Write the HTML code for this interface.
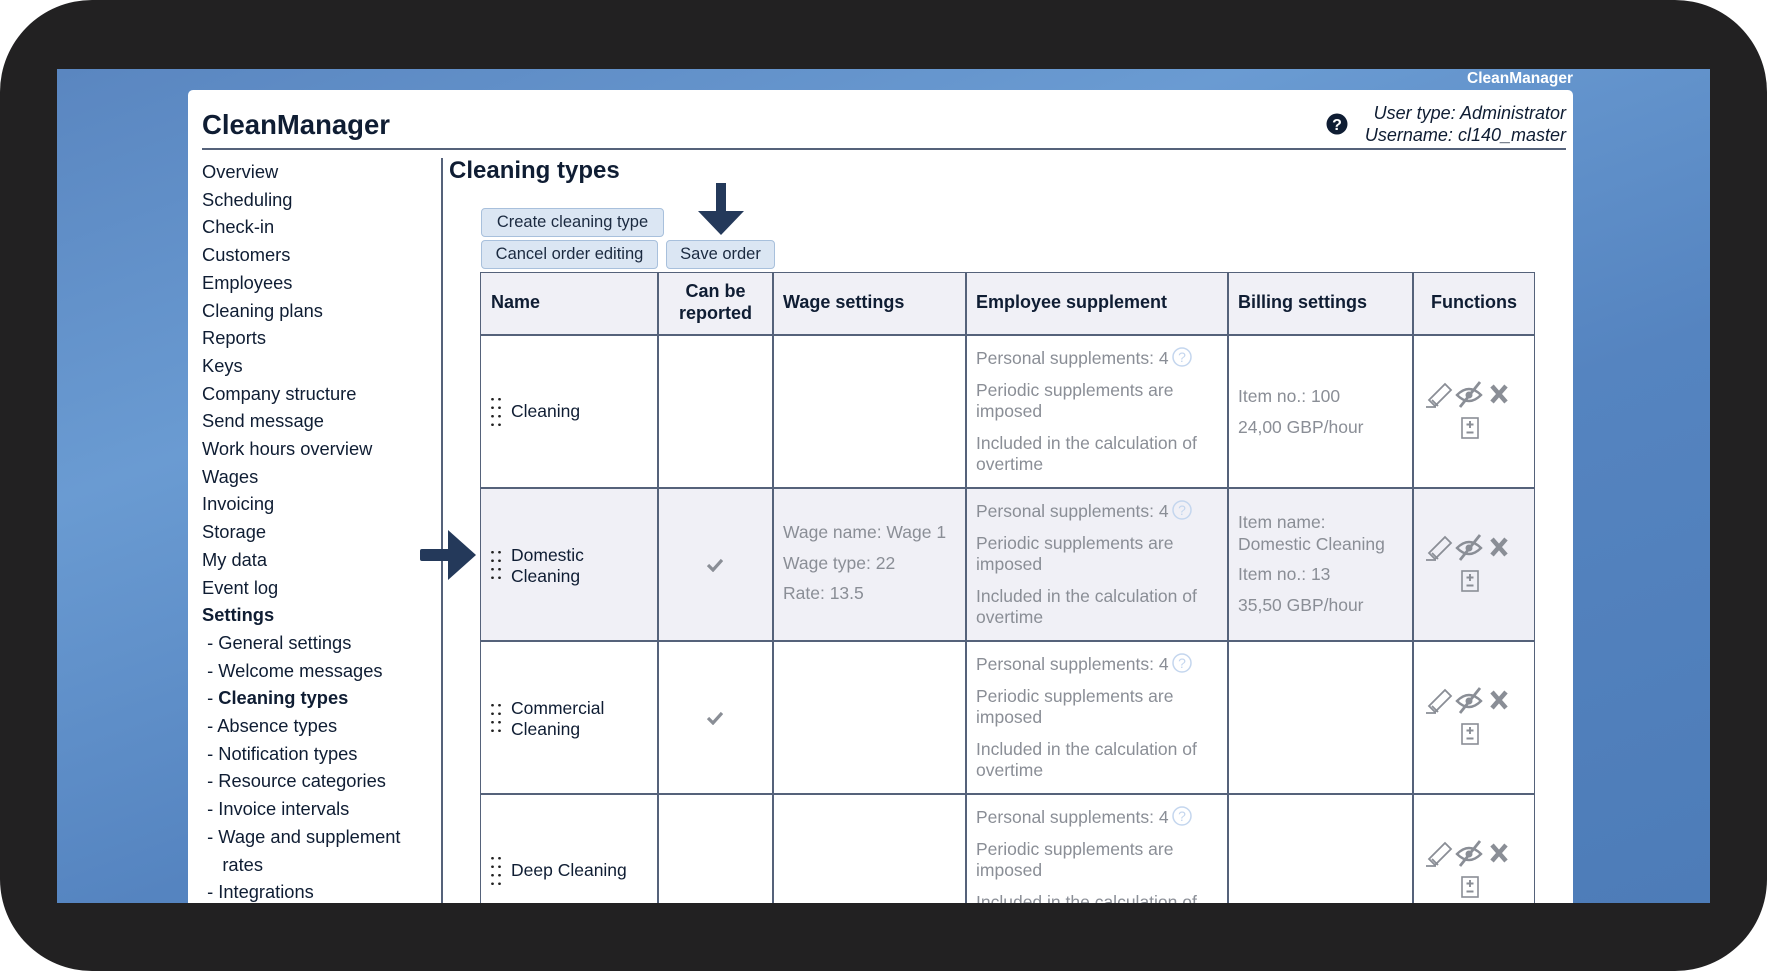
<!DOCTYPE html>
<html><head><meta charset="utf-8"><style>
*{margin:0;padding:0;box-sizing:border-box}
html,body{width:1767px;height:971px;overflow:hidden}
body{background:#fff;font-family:"Liberation Sans",sans-serif;position:relative}
#bezel{position:absolute;left:0;top:0;width:1767px;height:971px;background:#222122;border-radius:92px}
#screen{position:absolute;left:57px;top:69px;width:1653px;height:834px;overflow:hidden;background:linear-gradient(160deg,#5a86c0 0%,#6a9bd2 30%,#5584c0 60%,#4d7cb8 100%)}
.a{position:absolute;white-space:nowrap}
#panel{position:absolute;left:131px;top:21px;width:1385px;height:813px;overflow:hidden;background:#fff;border-radius:5px 5px 0 0}
.nav{font-size:18.3px;color:#0f1d33;line-height:27.7px}
.btn{position:absolute;height:29px;background:#dbe6f3;border:1px solid #a8c0dc;border-radius:4px;font-size:16.5px;color:#1b2a40;line-height:27px;text-align:center}
.g{color:#8a8e96;font-size:17.5px;line-height:21.5px}
.g p{margin-bottom:10px}
.h{font-weight:bold;font-size:18px;color:#0f1d33}
.dots{position:absolute;width:12px;height:34px;background-image:radial-gradient(circle,#222 1.2px,transparent 1.5px);background-size:7px 8.5px}
</style></head><body>
<div id="bezel"></div>
<div id="screen">
<div class="a" style="right:137px;top:0;font-size:15.5px;font-weight:bold;color:#fff;line-height:19px">CleanManager</div>
<div id="panel">
<div class="a" style="left:14px;top:19px;font-size:27.5px;font-weight:bold;color:#0f1d33">CleanManager</div>
<div class="a" style="left:14px;top:58px;width:1364px;height:1.5px;background:#55627a"></div>
<svg class="a" style="left:1138px;top:23px" width="22" height="22" viewBox="0 0 22 22"><circle cx="11" cy="11" r="10.5" fill="#0f1d33"/><text x="11" y="17" font-family="Liberation Sans" font-weight="bold" font-size="16" fill="#fff" text-anchor="middle">?</text></svg>
<div class="a" style="right:7px;top:12px;font-size:18px;font-style:italic;color:#0f1d33;text-align:right;line-height:22px">User type: Administrator<br>Username: cl140_master</div>
<div class="a nav" style="left:14px;top:68px">Overview<br>Scheduling<br>Check-in<br>Customers<br>Employees<br>Cleaning plans<br>Reports<br>Keys<br>Company structure<br>Send message<br>Work hours overview<br>Wages<br>Invoicing<br>Storage<br>My data<br>Event log<br><b>Settings</b><br>&nbsp;- General settings<br>&nbsp;- Welcome messages<br>&nbsp;- <b>Cleaning types</b><br>&nbsp;- Absence types<br>&nbsp;- Notification types<br>&nbsp;- Resource categories<br>&nbsp;- Invoice intervals<br>&nbsp;- Wage and supplement<br>&nbsp;&nbsp;&nbsp;&nbsp;rates<br>&nbsp;- Integrations</div>
<div class="a" style="left:253px;top:68px;width:1.5px;height:745px;background:#55627a"></div>
<div class="a" style="left:261px;top:67px;font-size:24px;font-weight:bold;color:#0f1d33">Cleaning types</div>
<div class="btn" style="left:293px;top:118px;width:183px">Create cleaning type</div>
<div class="btn" style="left:293px;top:150px;width:177px">Cancel order editing</div>
<div class="btn" style="left:478px;top:150px;width:109px">Save order</div>
<svg class="a" style="left:508px;top:93px" width="50" height="52" viewBox="0 0 50 52"><rect x="20" y="0" width="10" height="30" fill="#24395a"/><polygon points="2,28 48,28 25,52" fill="#24395a"/></svg>
<div class="a" style="left:292px;top:182px;width:1055px;height:62px;background:#f0f0f6"></div>
<div class="a" style="left:292px;top:397px;width:1055px;height:153px;background:#f0f0f6"></div>
<div class="a" style="left:292px;top:182px;width:1055px;height:631px;border:1.5px solid #55627a;border-bottom:none"></div>
<div class="a" style="left:469px;top:182px;width:1.5px;height:631px;background:#55627a"></div>
<div class="a" style="left:584px;top:182px;width:1.5px;height:631px;background:#55627a"></div>
<div class="a" style="left:777px;top:182px;width:1.5px;height:631px;background:#55627a"></div>
<div class="a" style="left:1039px;top:182px;width:1.5px;height:631px;background:#55627a"></div>
<div class="a" style="left:1224px;top:182px;width:1.5px;height:631px;background:#55627a"></div>
<div class="a" style="left:292px;top:244px;width:1055px;height:1.5px;background:#55627a"></div>
<div class="a" style="left:292px;top:397px;width:1055px;height:1.5px;background:#55627a"></div>
<div class="a" style="left:292px;top:550px;width:1055px;height:1.5px;background:#55627a"></div>
<div class="a" style="left:292px;top:703px;width:1055px;height:1.5px;background:#55627a"></div>
<div class="a h" style="left:303px;top:202px">Name</div>
<div class="a h" style="left:470px;width:115px;top:190px;text-align:center;line-height:22px;white-space:normal">Can be<br>reported</div>
<div class="a h" style="left:595px;top:202px">Wage settings</div>
<div class="a h" style="left:788px;top:202px">Employee supplement</div>
<div class="a h" style="left:1050px;top:202px">Billing settings</div>
<div class="a h" style="left:1225px;width:122px;text-align:center;top:202px">Functions</div>
<div id="rows"></div>
</div></div>
<svg class="a" style="left:420px;top:530px" width="56" height="50" viewBox="0 0 56 50"><rect x="0" y="19" width="30" height="12" rx="2" fill="#24395a"/><polygon points="28,0 56,25 28,50" fill="#24395a"/></svg>
<script>
var rows=[
{y:245,name:"Cleaning",chk:false,wage:"",bill:"<p>Item no.: 100</p><p>24,00 GBP/hour</p>"},
{y:398,name:"Domestic<br>Cleaning",chk:true,wage:"<p>Wage name: Wage 1</p><p>Wage type: 22</p><p>Rate: 13.5</p>",bill:"<p>Item name:<br>Domestic Cleaning</p><p>Item no.: 13</p><p>35,50 GBP/hour</p>"},
{y:551,name:"Commercial<br>Cleaning",chk:true,wage:"",bill:""},
{y:704,name:"Deep Cleaning",chk:false,wage:"",bill:""}];
var h="";
var q='<svg width="20" height="20" viewBox="0 0 20 20" style="vertical-align:-3px;margin-left:3px"><circle cx="10" cy="10" r="9" fill="none" stroke="#c4d6ee" stroke-width="1.5"/><text x="10" y="15" font-family="Liberation Sans" font-size="14" fill="#c4d6ee" text-anchor="middle">?</text></svg>';
rows.forEach(function(r){
 var two=r.name.indexOf("<br>")>0;
 h+='<div class="dots" style="left:301px;top:'+(r.y+60)+'px"></div>';
 h+='<div class="a" style="left:323px;top:'+(r.y+(two?57:66))+'px;font-size:17.5px;color:#0f1d33;line-height:21px">'+r.name+'</div>';
 if(r.chk)h+='<svg class="a" style="left:519px;top:'+(r.y+70)+'px" width="16" height="14" viewBox="0 0 16 14"><path d="M1 7 L6 12 L15 2" fill="none" stroke="#8a8e96" stroke-width="3.2"/></svg>';
 if(r.wage)h+='<div class="a g" style="left:595px;top:'+(r.y+34)+'px;line-height:21.5px">'+r.wage.replace(/<p>/g,'<p style="margin-bottom:9px">')+'</div>';
 h+='<div class="a g" style="left:788px;top:'+(r.y+12)+'px"><p>Personal supplements: 4'+q+'</p><p>Periodic supplements are<br>imposed</p><p>Included in the calculation of<br>overtime</p></div>';
 if(r.bill)h+='<div class="a g" style="left:1050px;top:'+(r.y+(r.wage?24:51))+'px">'+r.bill.replace(/<p>/g,'<p style="margin-bottom:9px">')+'</div>';
 var iy=r.y+40;
 h+='<svg class="a" style="left:1236px;top:'+iy+'px" width="100" height="64" viewBox="0 0 100 64" fill="none" stroke="#8a8e96"><path d="M5 25 L21 9 L27 15 L11 31 Z M8 25 L14 31 M2 32 L12 32" stroke-width="1.8"/><path d="M33 20 Q45 8 57 20 Q45 32 33 20 Z" stroke-width="2.4"/><circle cx="45" cy="20" r="3.5" fill="#8a8e96" stroke="none"/><path d="M36 32 L56 7" stroke-width="2.8"/><path d="M68 11 L82 27 M82 11 L68 27" stroke-width="4.5"/><rect x="38" y="43" width="16" height="20" stroke-width="1.6"/><path d="M46 46 V53 M42.5 49.5 H49.5 M42.5 57.5 H49.5" stroke-width="1.9"/></svg>';
});
document.getElementById("rows").innerHTML=h;
</script>
</body></html>
